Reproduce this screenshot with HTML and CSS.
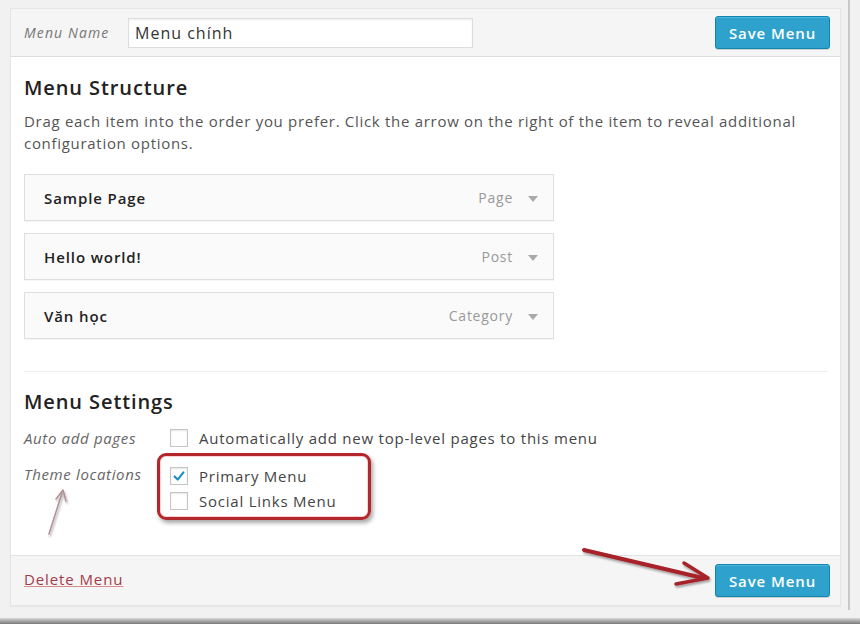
FILE: index.html
```html
<!DOCTYPE html>
<html>
<head>
<meta charset="utf-8">
<link rel="stylesheet" href="styles.css">
</head>
<body>
<div class="page">
  <div class="panel">
    <div class="header">
      <label class="name-label">Menu Name</label>
      <div class="name-input">Menu chính</div>
      <button class="btn-save">Save Menu</button>
    </div>
    <div class="body">
      <h3 class="section-title">Menu Structure</h3>
      <p class="desc">Drag each item into the order you prefer. Click the arrow on the right of the item to reveal additional configuration options.</p>
      <ul class="items">
        <li class="item"><span class="item-title">Sample Page</span><span class="item-type">Page</span><span class="caret"></span></li>
        <li class="item"><span class="item-title">Hello world!</span><span class="item-type">Post</span><span class="caret"></span></li>
        <li class="item"><span class="item-title">Văn học</span><span class="item-type">Category</span><span class="caret"></span></li>
      </ul>
      <div class="divider"></div>
      <h3 class="section-title settings-title">Menu Settings</h3>
      <div class="setting-row">
        <div class="setting-label">Auto add pages</div>
        <div class="setting-opts">
          <div class="opt"><span class="cb"></span>Automatically add new top-level pages to this menu</div>
        </div>
      </div>
      <div class="setting-row theme-row">
        <div class="setting-label">Theme locations</div>
        <div class="setting-opts">
          <div class="opt"><span class="cb checked"><svg viewBox="0 0 18 18" width="16" height="16"><path d="M4 9.5 L7.5 13 L14 5" fill="none" stroke="#1e8cbe" stroke-width="2.4" stroke-linecap="round" stroke-linejoin="round"/></svg></span>Primary Menu</div>
          <div class="opt"><span class="cb"></span>Social Links Menu</div>
        </div>
        <div class="highlight-box"></div>
      </div>
    </div>
    <div class="footer">
      <a class="delete">Delete Menu</a>
      <button class="btn-save">Save Menu</button>
    </div>
    <svg class="annot" width="830" height="600" viewBox="0 0 830 600">
      <defs>
        <filter id="sh" x="-20%" y="-20%" width="140%" height="140%">
          <feDropShadow dx="1" dy="2" stdDeviation="1.2" flood-color="#000" flood-opacity="0.35"/>
        </filter>
      </defs>
      <g filter="url(#sh)" fill="none" stroke-linecap="round" stroke-linejoin="round">
        <path d="M573 541 L692 569" stroke="#a8222b" stroke-width="4"/>
        <path d="M673 554 L697 569 L665 575" stroke="#a8222b" stroke-width="3.5"/>
        <path d="M38 525 L51 484" stroke="#b08f95" stroke-width="1.5"/>
        <path d="M45 490 L52 481 L55 492" stroke="#b08f95" stroke-width="1.5"/>
      </g>
    </svg>
  </div>
  <div class="scroll-edge"></div>
</div>
<div class="bottom-band"></div>
</body>
</html>
```

FILE: styles.css
```css
* { box-sizing: border-box; }
html, body { margin: 0; padding: 0; }
body {
  width: 860px;
  height: 624px;
  background: #f1f1f1;
  font-family: "Open Sans", "Liberation Sans", sans-serif;
  color: #444;
  overflow: hidden;
  position: relative;
}
.page {
  display: flex;
  padding: 8px 0 0 10px;
  height: 618px;
}
.panel {
  position: relative;
  width: 831px;
  height: 598px;
  background: #fff;
  border: 1px solid #e5e5e5;
  display: flex;
  flex-direction: column;
  box-shadow: 0 1px 1px rgba(0,0,0,.04);
}
.scroll-edge {
  margin-left: 7px;
  width: 2px;
  background: #c9c9c9;
  height: 610px;
  margin-top: -8px;
}
.bottom-band {
  position: absolute;
  left: 0; right: 0; bottom: 0;
  height: 6px;
  background: linear-gradient(#d8d8d8, #7a7a7a);
}
.header {
  height: 48px;
  background: #f5f5f5;
  border-bottom: 1px solid #dedede;
  display: flex;
  align-items: center;
  padding: 0 10px 0 13px;
}
.name-label {
  font-style: italic;
  font-size: 14px;
  letter-spacing: 1.1px;
  color: #777;
  width: 104px;
}
.name-input {
  width: 345px;
  height: 30px;
  background: #fff;
  border: 1px solid #ddd;
  box-shadow: inset 0 1px 2px rgba(0,0,0,.07);
  font-size: 16px;
  letter-spacing: 1px;
  color: #333;
  padding: 2px 6px;
  line-height: 24px;
}
.btn-save {
  margin-left: auto;
  width: 115px;
  height: 33px;
  background: #2ea2cc;
  border: 1px solid #0f84b0;
  border-radius: 3px;
  color: #fff;
  font-family: "Open Sans", "Liberation Sans", sans-serif;
  font-weight: 600;
  font-size: 15px;
  letter-spacing: 0.9px;
  box-shadow: inset 0 1px 0 rgba(120,200,230,.5), 0 1px 0 rgba(0,0,0,.15);
  padding: 0;
}
.body {
  flex: 1;
  padding: 0 12px 0 13px;
  position: relative;
}
.section-title {
  font-size: 20px;
  font-weight: 600;
  letter-spacing: 0.9px;
  color: #222;
  margin: 18px 0 0;
  line-height: 26px;
}
.desc {
  margin: 9px 0 0;
  font-size: 15px;
  letter-spacing: 0.7px;
  line-height: 22px;
  color: #555;
  width: 805px;
}
.items {
  list-style: none;
  margin: 20px 0 0;
  padding: 0;
  display: flex;
  flex-direction: column;
  gap: 12px;
}
.item {
  width: 530px;
  height: 47px;
  background: #fafafa;
  border: 1px solid #dfdfdf;
  box-shadow: 0 1px 1px rgba(0,0,0,.04);
  display: flex;
  align-items: center;
  padding: 0 15px 0 19px;
}
.item-title {
  font-weight: 600;
  font-size: 15px;
  letter-spacing: 0.9px;
  color: #222;
}
.item-type {
  margin-left: auto;
  font-size: 14px;
  letter-spacing: 0.75px;
  color: #999;
}
.caret {
  margin-left: 15px;
  width: 0; height: 0;
  border-left: 5px solid transparent;
  border-right: 5px solid transparent;
  border-top: 6px solid #aaa;
  margin-top: 2px;
}
.divider {
  margin-top: 32px;
  height: 1px;
  background: #eee;
  width: 804px;
}
.settings-title {
  margin-top: 17px;
}
.setting-row {
  display: flex;
  margin-top: 13px;
  position: relative;
}
.setting-label {
  width: 146px;
  font-style: italic;
  font-size: 15px;
  letter-spacing: 0.65px;
  color: #666;
  line-height: 20px;
}
.setting-opts {
  display: flex;
  flex-direction: column;
  gap: 5px;
}
.opt {
  display: flex;
  align-items: center;
  font-size: 15px;
  letter-spacing: 0.77px;
  color: #444;
  line-height: 20px;
}
.cb {
  width: 18px;
  height: 18px;
  border: 1px solid #c5c5c5;
  background: #fff;
  box-shadow: inset 0 1px 2px rgba(0,0,0,.1);
  margin-right: 11px;
  display: flex;
  align-items: center;
  justify-content: center;
}
.theme-row { margin-top: 16px; }
.theme-row .setting-opts { padding-top: 2px; }
.highlight-box {
  position: absolute;
  left: 133px;
  top: -11px;
  width: 214px;
  height: 67px;
  border: 3px solid #b3262b;
  border-radius: 9px;
  box-shadow: 2px 3px 4px rgba(0,0,0,.35), inset 0 0 0 1px rgba(255,180,180,.6);
}
.footer {
  height: 50px;
  background: #f5f5f5;
  border-top: 1px solid #e3e3e3;
  display: flex;
  align-items: center;
  padding: 0 10px 0 13px;
}
.delete {
  color: #a33a4a;
  text-decoration: underline;
  font-size: 15px;
  letter-spacing: 0.9px;
  text-decoration-color: #d98b8b;
  margin-top: -4px;
}
.annot {
  position: absolute;
  left: 0;
  top: 0;
  pointer-events: none;
}
```
